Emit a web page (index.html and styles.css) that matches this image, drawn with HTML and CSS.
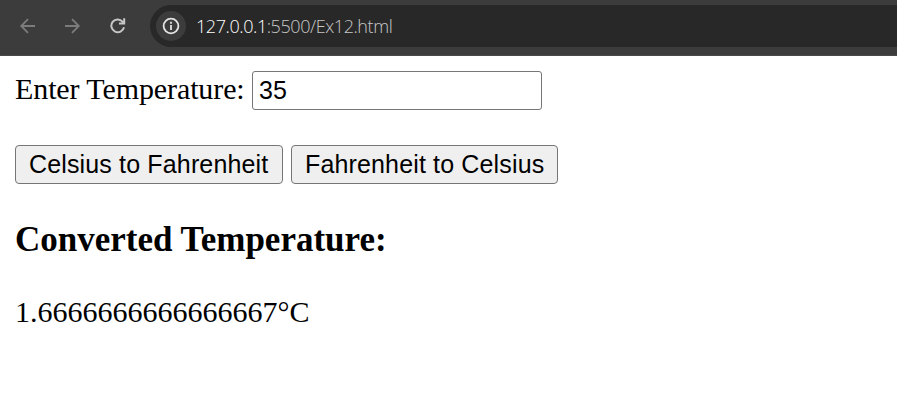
FILE: index.html
```html
<!DOCTYPE html>
<html lang="en">
<head>
<meta charset="utf-8">
<title>Temperature Converter</title>
<link rel="stylesheet" href="styles.css">
</head>
<body>
<header class="toolbar">
  <svg class="nav dim" viewBox="0 0 16 16"><path d="M15 8H1.5M8 1.2 1.2 8 8 14.8"/></svg>
  <svg class="nav dim" viewBox="0 0 16 16"><path d="M0 8h13.5M7 1.2 13.8 8 7 14.8"/></svg>
  <svg class="nav reload" viewBox="0 0 16 16"><path d="M14 9.2A6.4 6.4 0 1 1 12.6 3.6L14 5M14.2 0.3V5.6H9"/></svg>
  <div class="address">
    <span class="info"><svg viewBox="0 0 18 18"><circle cx="9" cy="9" r="7.4"/><path d="M9 8v5M9 4.8v1.9"/></svg></span>
    <span class="url">127.0.0.1<span class="path">:5500/Ex12.html</span></span>
  </div>
</header>
<main>
  <div class="row field">
    <label for="temp">Enter Temperature:</label>
    <input id="temp" type="text" value="35">
  </div>
  <div class="row actions">
    <button type="button">Celsius to Fahrenheit</button>
    <button type="button" class="to-celsius">Fahrenheit to Celsius</button>
  </div>
  <h3>Converted Temperature:</h3>
  <p>1.6666666666666667°C</p>
</main>
</body>
</html>
```
FILE: styles.css
```css
* { box-sizing: border-box; }
body {
  margin: 0;
  background: #fff;
  color: #000;
  font: 30px/34px "Liberation Serif", "Times New Roman", serif;
  overflow: hidden;
}
.toolbar {
  display: flex;
  align-items: center;
  height: 56px;
  padding: 0 0 4px 20px;
  background: #3c3c3c;
  border-bottom: 1px solid #484848;
}
.nav {
  width: 16px;
  height: 16px;
  margin-right: 29px;
  fill: none;
  stroke: #c7c7c7;
  stroke-width: 2;
}
.dim { stroke: #7c7c7c; stroke-width: 1.8; }
.reload { margin-right: 24px; }
.address {
  display: flex;
  align-items: center;
  flex: 1;
  height: 42px;
  padding-left: 6px;
  background: #282828;
  border-radius: 21px 0 0 21px;
}
.info {
  display: grid;
  place-items: center;
  width: 30px;
  height: 30px;
  margin-right: 10px;
  border-radius: 50%;
  background: #3c3c3c;
}
.info svg { width: 18px; height: 18px; fill: none; stroke: #e3e3e3; stroke-width: 1.8; }
.url {
  padding-top: 1px;
  font: 300 18px/24px "Open Sans", sans-serif;
  letter-spacing: -0.42px;
  color: #fff;
  white-space: nowrap;
}
.path { color: #c7c7c7; }
main { padding: 15px; }
.row { display: flex; align-items: center; height: 39px; gap: 8px; }
.actions { margin-top: 35px; }
label { width: 229px; padding-bottom: 3px; letter-spacing: -0.1px; white-space: nowrap; }
input, button {
  height: 39px;
  border: 1px solid #767676;
  color: #000;
  font: 25px "Liberation Sans", Arial, sans-serif;
}
input { width: 290px; padding: 0 6px; border-radius: 3px; background: #fff; }
button {
  width: 268px;
  padding: 0 0 0 13px;
  border-radius: 4px;
  background: #efefef;
  letter-spacing: 0.15px;
  text-align: left;
  white-space: nowrap;
}
.to-celsius { width: 267px; }
h3 { margin: 36px 0 0; font-size: 35px; line-height: 40px; }
p { margin: 35px 0 0; }
```
